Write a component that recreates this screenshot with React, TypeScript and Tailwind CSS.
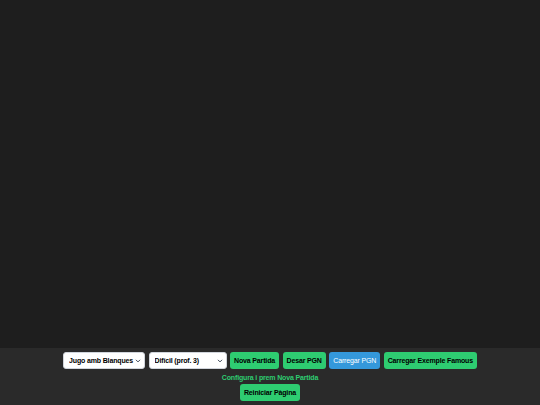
import React from 'react';

const font = { fontFamily: '"Liberation Sans", Arial, sans-serif' };

const Chevron = () => (
    <svg className="pointer-events-none absolute right-[4px] top-1/2 h-[6px] w-[6px] -translate-y-1/2 text-gray-700" viewBox="0 0 10 10" fill="none" stroke="currentColor">
        <path d="M2 3.5l3 3 3-3" strokeWidth={1.6} strokeLinecap="round" strokeLinejoin="round" />
    </svg>
);

const SelectBox: React.FC<{ width: string; options: string[] }> = ({ width, options }) => (
    <div className={`relative h-[17px] ${width}`}>
        <select
            className="block h-[17px] w-full appearance-none rounded-[3px] border border-gray-300 bg-white pl-[5px] pr-[9px] text-[7px] font-bold leading-[15px] tracking-[-0.15px] text-black outline-none"
            defaultValue={options[0]}
        >
            {options.map((o) => (
                <option key={o}>{o}</option>
            ))}
        </select>
        <Chevron />
    </div>
);

const btn = 'block h-[17px] rounded-[3px] px-[4px] text-[7px] leading-[17px] tracking-[-0.15px]';

export default function App() {
    return (
        <div className="flex h-[405px] w-[540px] flex-col bg-[#1e1e1e]" style={font}>
            <div className="flex-1 bg-[#1e1e1e]" />
            <div className="flex h-[57px] flex-col items-center bg-[#2a2a2a] pt-[4px]">
                <div className="flex h-[17px] items-center gap-[3.5px]">
                    <SelectBox width="w-[82px]" options={['Jugo amb Blanques', 'Jugo amb Negres']} />
                    <SelectBox width="w-[78px]" options={['Difícil (prof. 3)', 'Fàcil (prof. 1)', 'Normal (prof. 2)']} />
                    <button className={`${btn} bg-[#2ecc71] font-bold text-black`}>Nova Partida</button>
                    <button className={`${btn} bg-[#2ecc71] font-bold text-black`}>Desar PGN</button>
                    <button className={`${btn} bg-[#3498db] text-white`}>Carregar PGN</button>
                    <button className={`${btn} bg-[#2ecc71] font-bold text-black`}>Carregar Exemple Famous</button>
                </div>
                <p className="mt-[4px] text-[7px] font-bold leading-[10px] tracking-[-0.15px] text-[#2ecc71]">Configura i prem Nova Partida</p>
                <button className={`${btn} mt-[1px] bg-[#2ecc71] font-bold text-black`}>Reiniciar Pàgina</button>
            </div>
        </div>
    );
}
